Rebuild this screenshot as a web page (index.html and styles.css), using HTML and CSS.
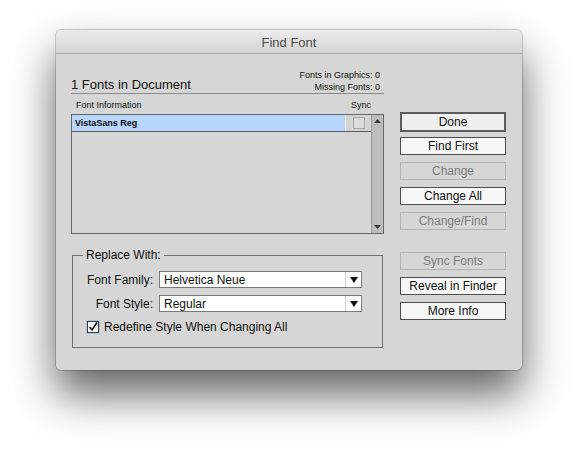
FILE: index.html
```html
<!DOCTYPE html>
<html>
<head>
<meta charset="utf-8">
<link rel="stylesheet" href="styles.css">
</head>
<body>
<div class="window">
  <div class="titlebar">Find Font</div>
  <div class="content">
    <div class="left">
      <div class="summary">
        <div class="count">1 Fonts in Document</div>
        <div class="stats">
          <div>Fonts in Graphics: 0</div>
          <div>Missing Fonts: 0</div>
        </div>
      </div>
      <div class="colhead"><span>Font Information</span><span>Sync</span></div>
      <div class="list">
        <div class="rows">
          <div class="row">
            <div class="name">VistaSans Reg</div>
            <div class="sync"><span class="syncbox"></span></div>
          </div>
        </div>
        <div class="scrollbar">
          <svg width="11" height="8" viewBox="0 0 11 8"><path d="M2 6 L5.5 2 L9 6 Z" fill="#3a3a3a"/></svg>
          <svg width="11" height="8" viewBox="0 0 11 8"><path d="M2 2 L5.5 6 L9 2 Z" fill="#3a3a3a"/></svg>
        </div>
      </div>
      <fieldset class="group">
        <legend>Replace With:</legend>
        <div class="field">
          <span class="label">Font Family:</span>
          <div class="select"><span class="value">Helvetica Neue</span><span class="arrow"><svg width="8" height="6" viewBox="0 0 8 6"><path d="M0 0 H8 L4 6 Z" fill="#111"/></svg></span></div>
        </div>
        <div class="field">
          <span class="label">Font Style:</span>
          <div class="select"><span class="value">Regular</span><span class="arrow"><svg width="8" height="6" viewBox="0 0 8 6"><path d="M0 0 H8 L4 6 Z" fill="#111"/></svg></span></div>
        </div>
        <div class="check">
          <svg width="14" height="14" viewBox="0 0 14 14">
            <rect x="0.5" y="0.5" width="13" height="13" fill="#7fa9e0"/>
            <rect x="1.5" y="1.5" width="11" height="11" fill="#f4f4f4" stroke="#3c3c3c" stroke-width="1"/>
            <path d="M3.5 7 L6 10 L11 2.5" fill="none" stroke="#111" stroke-width="1.6"/>
          </svg>
          <span>Redefine Style When Changing All</span>
        </div>
      </fieldset>
    </div>
    <div class="right">
      <div class="btn default">Done</div>
      <div class="btn">Find First</div>
      <div class="btn disabled">Change</div>
      <div class="btn">Change All</div>
      <div class="btn disabled">Change/Find</div>
      <div class="btn disabled gap">Sync Fonts</div>
      <div class="btn">Reveal in Finder</div>
      <div class="btn">More Info</div>
    </div>
  </div>
</div>
</body>
</html>
```

FILE: styles.css
```css
html, body {
  margin: 0;
  padding: 0;
  background: #ffffff;
}
body {
  font-family: "Liberation Sans", Arial, sans-serif;
  font-size: 12px;
  color: #111;
  min-height: 450px;
  padding-top: 30px;
  box-sizing: border-box;
}
.window {
  margin: 0 0 0 56px;
  width: 466px;
  height: 340px;
  background: #d6d6d6;
  border-radius: 5px;
  box-shadow: 0 0 0 1px rgba(0,0,0,0.18), 0 24px 44px rgba(0,0,0,0.62);
  overflow: hidden;
}
.titlebar {
  height: 23px;
  line-height: 25px;
  text-align: center;
  font-size: 13px;
  color: #4a4a4a;
  background: linear-gradient(#ececec, #d4d4d4);
  border-bottom: 1px solid #ababab;
}
.content {
  display: flex;
  padding-left: 15px;
}
.left {
  width: 313px;
}
.summary {
  display: flex;
  justify-content: space-between;
  align-items: flex-end;
  padding-top: 15px;
  padding-bottom: 0;
  border-bottom: 1px solid #8c8c8c;
}
.count {
  font-size: 13px;
  line-height: 17px;
}
.stats {
  font-size: 9px;
  line-height: 12px;
  text-align: right;
  padding-right: 4px;
}
.colhead {
  display: flex;
  justify-content: space-between;
  font-size: 9px;
  line-height: 12px;
  margin-top: 5px;
  padding: 0 13px 0 5px;
}
.list {
  margin-top: 3px;
  height: 118px;
  border: 1px solid #676767;
  display: flex;
}
.rows {
  flex: 1;
}
.row {
  display: flex;
  height: 16px;
  border-bottom: 1px solid #5a5a5a;
}
.name {
  flex: 1;
  background: #b6d4fc;
  font-weight: bold;
  font-size: 9px;
  line-height: 16px;
  padding-left: 3px;
}
.sync {
  width: 25px;
  background: #d4d4d4;
  border-left: 1px solid #e8e8e8;
  display: flex;
  justify-content: center;
  align-items: center;
}
.syncbox {
  width: 10px;
  height: 10px;
  border: 1px solid #a9a9a9;
  background: #dcdcdc;
}
.scrollbar {
  width: 11px;
  background: #bdbdbd;
  border-left: 1px solid #9a9a9a;
  display: flex;
  flex-direction: column;
  justify-content: space-between;
  padding: 2px 0 2px;
}
.group {
  margin: 14px 0 0 1px;
  padding: 9px 0 0 0;
  width: 311px;
  border: 1px solid #727272;
  box-sizing: border-box;
  height: 100px;
}
.group legend {
  margin-left: 10px;
  padding: 0 3px;
  font-size: 12px;
  line-height: 14px;
}
.field {
  display: flex;
  align-items: center;
  margin-bottom: 7px;
}
.label {
  width: 80px;
  text-align: right;
  padding-right: 6px;
}
.select {
  width: 201px;
  height: 15px;
  border: 1px solid #7a7a7a;
  background: #ffffff;
  display: flex;
  align-items: center;
}
.select .value {
  flex: 1;
  padding-left: 4px;
}
.select .arrow {
  width: 15px;
  height: 15px;
  border-left: 1px solid #cfcfcf;
  display: flex;
  align-items: center;
  justify-content: center;
}
.check {
  display: flex;
  align-items: center;
  padding-left: 13px;
  margin-top: 8px;
}
.check svg {
  margin-right: 4px;
}
.right {
  margin-left: 16px;
  width: 106px;
  padding-top: 58px;
  display: flex;
  flex-direction: column;
}
.btn {
  box-sizing: border-box;
  height: 18px;
  margin-top: 7px;
  border: 1px solid #4e4e4e;
  background: #f7f7f7;
  text-align: center;
  line-height: 16px;
  color: #111;
}
.btn.default {
  margin-top: 0;
  height: 20px;
  border: 2px solid #5c5c5c;
  line-height: 16px;
  background: #efefef;
}
.btn.default + .btn {
  margin-top: 5px;
}
.btn.disabled {
  border-color: #b3b3b3;
  background: #d6d6d6;
  color: #7b7b7b;
}
.btn.gap {
  margin-top: 22px;
}
```
